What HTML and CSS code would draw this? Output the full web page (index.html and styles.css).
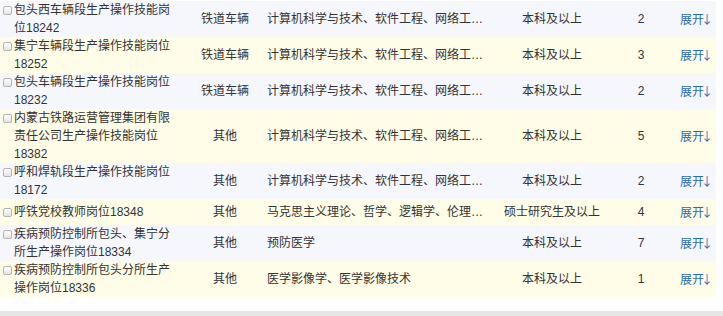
FILE: index.html
```html
<!DOCTYPE html>
<html lang="zh-CN">
<head>
<meta charset="utf-8">
<title>岗位列表</title>
<link rel="stylesheet" href="styles.css">
</head>
<body>
<div class="page">
<table class="jobs">
<colgroup>
<col class="c-name"><col class="c-type"><col class="c-major"><col class="c-edu"><col class="c-num"><col class="c-op">
</colgroup>
<tbody>
<tr class="odd">
<td class="name"><div class="name-wrap"><span class="cb"></span><span class="name-text">包头西车辆段生产操作技能岗位18242</span></div></td>
<td class="type">铁道车辆</td>
<td class="major">计算机科学与技术、软件工程、网络工程、通信工程</td>
<td class="edu">本科及以上</td>
<td class="num">2</td>
<td class="op"><a class="toggle">展开<span class="arrow">↓</span></a></td>
</tr>
<tr class="even">
<td class="name"><div class="name-wrap"><span class="cb"></span><span class="name-text">集宁车辆段生产操作技能岗位18252</span></div></td>
<td class="type">铁道车辆</td>
<td class="major">计算机科学与技术、软件工程、网络工程、通信工程</td>
<td class="edu">本科及以上</td>
<td class="num">3</td>
<td class="op"><a class="toggle">展开<span class="arrow">↓</span></a></td>
</tr>
<tr class="odd">
<td class="name"><div class="name-wrap"><span class="cb"></span><span class="name-text">包头车辆段生产操作技能岗位18232</span></div></td>
<td class="type">铁道车辆</td>
<td class="major">计算机科学与技术、软件工程、网络工程、通信工程</td>
<td class="edu">本科及以上</td>
<td class="num">2</td>
<td class="op"><a class="toggle">展开<span class="arrow">↓</span></a></td>
</tr>
<tr class="even">
<td class="name"><div class="name-wrap"><span class="cb"></span><span class="name-text">内蒙古铁路运营管理集团有限责任公司生产操作技能岗位18382</span></div></td>
<td class="type">其他</td>
<td class="major">计算机科学与技术、软件工程、网络工程、通信工程</td>
<td class="edu">本科及以上</td>
<td class="num">5</td>
<td class="op"><a class="toggle">展开<span class="arrow">↓</span></a></td>
</tr>
<tr class="odd">
<td class="name"><div class="name-wrap"><span class="cb"></span><span class="name-text">呼和焊轨段生产操作技能岗位18172</span></div></td>
<td class="type">其他</td>
<td class="major">计算机科学与技术、软件工程、网络工程、通信工程</td>
<td class="edu">本科及以上</td>
<td class="num">2</td>
<td class="op"><a class="toggle">展开<span class="arrow">↓</span></a></td>
</tr>
<tr class="even">
<td class="name"><div class="name-wrap"><span class="cb"></span><span class="name-text">呼铁党校教师岗位18348</span></div></td>
<td class="type">其他</td>
<td class="major">马克思主义理论、哲学、逻辑学、伦理学、政治学</td>
<td class="edu">硕士研究生及以上</td>
<td class="num">4</td>
<td class="op"><a class="toggle">展开<span class="arrow">↓</span></a></td>
</tr>
<tr class="odd">
<td class="name"><div class="name-wrap"><span class="cb"></span><span class="name-text">疾病预防控制所包头、集宁分所生产操作岗位18334</span></div></td>
<td class="type">其他</td>
<td class="major">预防医学</td>
<td class="edu">本科及以上</td>
<td class="num">7</td>
<td class="op"><a class="toggle">展开<span class="arrow">↓</span></a></td>
</tr>
<tr class="even">
<td class="name"><div class="name-wrap"><span class="cb"></span><span class="name-text">疾病预防控制所包头分所生产操作岗位18336</span></div></td>
<td class="type">其他</td>
<td class="major">医学影像学、医学影像技术</td>
<td class="edu">本科及以上</td>
<td class="num">1</td>
<td class="op"><a class="toggle">展开<span class="arrow">↓</span></a></td>
</tr>
</tbody>
</table>
<div class="footer"></div>
</div>
</body>
</html>
```

FILE: styles.css
```css
html, body {
  margin: 0;
  padding: 0;
  background: #fff;
}
body {
  font-family: "Liberation Sans", "Noto Sans CJK SC", sans-serif;
  font-size: 12px;
  color: #333;
}
.page {
  width: 723px;
  height: 316px;
  display: flex;
  flex-direction: column;
  overflow: hidden;
}
.jobs {
  width: 716px;
  table-layout: fixed;
  border-collapse: collapse;
  margin-top: 1px;
}
.c-name { width: 188px; }
.c-type { width: 74px; }
.c-major { width: 222px; }
.c-edu { width: 136px; }
.c-num { width: 42px; }
.c-op { width: 54px; }
.jobs td {
  padding: 0;
  line-height: 18px;
  height: 26px;
  vertical-align: middle;
}
.jobs tr.odd td { background: #f5f7fd; }
.jobs tr.even td { background: #fffde8; }
.name-wrap {
  display: flex;
  align-items: flex-start;
  padding-left: 3px;
}
.cb {
  flex: none;
  width: 7px;
  height: 7px;
  margin: 5px 2px 0 0;
  border: 1px solid #b3b3b3;
  border-radius: 2px;
  background: linear-gradient(#ffffff, #e4e4e4);
}
.name-text {
  width: 158px;
}
.type, .edu, .num {
  text-align: center;
}
.major {
  padding-left: 5px !important;
  white-space: nowrap;
  overflow: hidden;
  text-overflow: ellipsis;
}
.op {
  padding-left: 18px !important;
  white-space: nowrap;
}
.toggle {
  color: #2b6cb0;
  text-decoration: none;
}
.arrow {
  font-family: "Noto Sans CJK SC", sans-serif;
  margin-left: -3px;
}
.footer {
  margin-top: auto;
  height: 5px;
  background: #e6e6e6;
}
```
